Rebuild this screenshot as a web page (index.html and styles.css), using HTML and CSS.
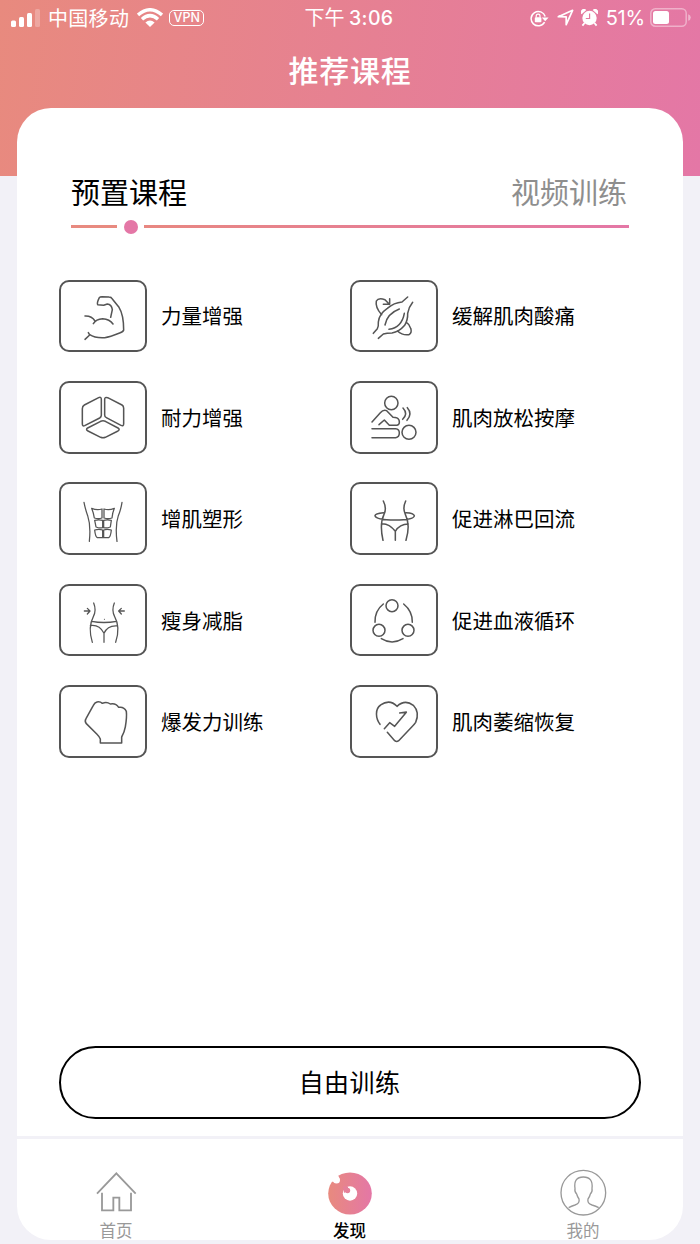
FILE: index.html
```html
<!DOCTYPE html>
<html lang="zh-CN">
<head>
<meta charset="utf-8">
<title>推荐课程</title>
<link rel="stylesheet" href="styles.css">
</head>
<body>
<div class="app">
  <header class="status">
    <div class="status-left">
      <svg class="signal" viewBox="0 0 29 18"><rect x="0" y="11.5" width="5" height="6.5" rx="1.5"/><rect x="8" y="8" width="5" height="10" rx="1.5"/><rect x="16" y="4" width="5" height="14" rx="1.5"/><rect x="24" y="0" width="5" height="18" rx="1.5" opacity=".25"/></svg>
      <span class="carrier">中国移动</span>
      <svg class="wifi" viewBox="0 0 26 19"><path d="M1 7Q13-3.5 25 7M5 11.3Q13 4 21 11.3" fill="none" stroke="#fff" stroke-width="3.4"/><path d="M8.4 14.6Q13 10.5 17.6 14.6L13 19Z"/></svg>
      <span class="vpn">VPN</span>
    </div>
    <div class="status-time">下午 <b>3:06</b></div>
    <div class="status-right">
      <svg class="lock" viewBox="0 0 19 17"><path d="M14.6 12.2A7.2 7.2 0 1 1 15.2 6.500" fill="none" stroke="#fff" stroke-width="1.5"/><path d="M11.800 7.4h6.800l-3.400 3.800z"/><rect x="4.8" y="7.2" width="6.600" height="5" rx=".8"/><path d="M6.200 7.5V6a1.900 1.900 0 0 1 3.800 0v1.5" fill="none" stroke="#fff" stroke-width="1.200"/></svg>
      <svg class="arrow" viewBox="0 0 17 17"><path d="M1.3 7.7L15.6 1.3L9.2 15.7V7.9Z" fill="none" stroke="#fff" stroke-width="1.7" stroke-linejoin="round"/></svg>
      <svg class="alarm" viewBox="0 0 17 18"><circle cx="8.5" cy="9" r="7.200"/><path d="M.6 5.2A3 3 0 0 1 5.3 1ZM16.400 5.2A3 3 0 0 0 11.7 1Z"/><path d="M3.6 14l-2.2 2.6M13.4 14l2.2 2.6" stroke="#fff" stroke-width="1.8"/><path d="M8.6 4.6v4.9H4.8" fill="none" stroke="#e37ca0" stroke-width="1.2"/></svg>
      <span class="percent">51%</span>
      <svg class="battery" viewBox="0 0 41 19"><rect x=".8" y=".8" width="35.4" height="17.4" rx="4.5" fill="none" stroke="#fff" stroke-opacity=".42" stroke-width="1.5"/><rect x="3" y="3" width="16" height="13" rx="2.5"/><path d="M38.2 6.2Q40.8 7 40.8 9.5T38.2 12.8Z" opacity=".45"/></svg>
    </div>
  </header>
  <h1 class="title">推荐课程</h1>

  <main class="card">
    <div class="tabs"><span class="tab active">预置课程</span><span class="tab">视频训练</span></div>
    <div class="slider"><i class="bar-short"></i><i class="dot"></i><i class="bar-long"></i></div>

    <section class="courses">
      <div class="course">
        <svg class="tile" viewBox="34 34 252 206"><path d="M106 136Q126 135 136 151M131 159Q139 145 159 144Q180 145 190 160M183 140L188 117Q186 101 173 100L162 104L144 102Q141 97 149 81Q151 78 157 78L178 79Q185 79 188 85L208 110Q222 132 222 178Q221 183 210 187Q180 199 165 201Q137 203 119 191M116 186L120 193L106 206"/></svg>
        <span>力量增强</span>
      </div>
      <div class="course">
        <svg class="tile" viewBox="37 34 252 206"><path d="M101 188L113 174Q117 167 116 154Q118 130 143 113Q163 96 187 94L204 79M116 203L131 190Q141 187 157 187Q178 184 195 164Q205 148 204 128Q207 110 219 95M136 163Q142 129 179 115M148 176Q186 171 194 128M126 132Q106 110 110 91Q116 80 136 87L149 101M131 101H150V84M173 181Q189 195 208 192Q218 186 213 173Q210 161 201 156"/></svg>
        <span>缓解肌肉酸痛</span>
      </div>
      <div class="course">
        <svg class="tile" viewBox="34 338 252 206"><path d="M104 404L147 382Q155 378 155 388V435Q155 440 150 443L105 466Q98 469 98 460V415Q98 407 104 404ZM174 382L217 404Q222 407 222 414V460Q222 469 214 465L170 442Q165 440 165 434V387Q165 379 174 382ZM114 473L153 453Q160 450 167 453L205 473Q212 477 205 482L167 501Q160 504 153 501L115 482Q107 478 114 473Z"/></svg>
        <span>耐力增强</span>
      </div>
      <div class="course">
        <svg class="tile" viewBox="37 338 252 206"><circle cx="155" cy="398" r="20"/><circle cx="208" cy="486" r="21"/><path d="M97 455L122 427Q131 417 141 421L160 441Q174 441 178 449Q182 462 172 465H149L134 449L118 463M97 475H168Q179 476 179 488T168 502H97M190 413Q206 430 189 447M203 412Q219 430 202 450"/></svg>
        <span>肌肉放松按摩</span>
      </div>
      <div class="course">
        <svg class="tile thin" viewBox="34 42 252 206"><path d="M103 97Q107 118 114 137Q124 167 119 214M217 97Q214 118 206 137Q196 166 202 214M126 115Q142 122 157 117V144Q146 148 134 144Q132 130 126 115ZM194 115Q178 122 163 117V144Q175 148 187 144Q188 130 194 115ZM135 151Q148 148 159 151V173Q149 175 139 171ZM185 151Q172 148 162 151V173Q172 175 182 171ZM135 180Q148 176 159 180V203H143Q137 200 135 180ZM185 180Q172 176 162 180V203H177Q183 200 185 180Z"/></svg>
        <span>增肌塑形</span>
      </div>
      <div class="course">
        <svg class="tile" viewBox="37 42 252 206"><path d="M131 93Q142 115 133 133Q119 162 130 211M198 93Q188 115 197 133Q213 164 199 211M131 128Q107 130 106 137Q108 150 166 150Q224 149 224 137Q222 129 199 128M126 161Q149 160 167 184Q180 162 206 162M167 184V211"/></svg>
        <span>促进淋巴回流</span>
      </div>
      <div class="course">
        <svg class="tile thin" viewBox="34 346 252 206"><path d="M132 397Q141 419 131 438Q114 470 128 515M194 397Q185 419 195 438Q213 470 198 515M126 452Q162 459 201 452M122 465Q149 461 163 488Q174 463 204 466M163 488V515M104 421H120M113 413L121 421L113 430M224 421H208M215 413L207 421L215 430"/><path d="M164 446h.5" stroke-width="3"/></svg>
        <span>瘦身减脂</span>
      </div>
      <div class="course">
        <svg class="tile" viewBox="37 346 252 206"><circle cx="157" cy="405" r="18"/><circle cx="118" cy="479" r="18"/><circle cx="205" cy="479" r="18"/><path d="M131 400Q105 420 106 455M192 400Q219 422 218 455M125 504Q157 524 190 504"/></svg>
        <span>促进血液循环</span>
      </div>
      <div class="course">
        <svg class="tile" viewBox="34 35 252 206"><path d="M152 203V191Q149 184 142 177L110 145Q104 138 109 130L131 90Q135 82 142 80Q151 78 158 84Q171 78 182 86Q198 82 207 96Q223 93 230 108Q232 125 227 155Q224 172 216 185V203Z"/></svg>
        <span>爆发力训练</span>
      </div>
      <div class="course">
        <svg class="tile" viewBox="37 35 252 206"><path d="M121 147C108 130 105 101 123 89Q150 70 172 93Q196 71 221 90Q241 111 228 141Q224 147 219 152L177 196Q171 201 165 196L143 171M134 160L150 142L165 153L200 111M180 113L200 110"/></svg>
        <span>肌肉萎缩恢复</span>
      </div>
    </section>
    <button class="free">自由训练</button>
  </main>

  <nav class="nav">
    <div class="nav-item">
      <svg class="nav-icon" viewBox="279 415 141 147"><g fill="none" stroke="#999" stroke-width="5.500"><path d="M291 492L349 431L407 492M306 489V542H340V504H358V542H393V489"/></g></svg>
      <span>首页</span>
    </div>
    <div class="nav-item current">
      <svg class="nav-icon" viewBox="0 0 47 49"><defs><linearGradient id="g"><stop stop-color="#e88a7e"/><stop offset="1" stop-color="#e477a6"/></linearGradient></defs><ellipse cx="23" cy="25.500" rx="21.800" ry="21" fill="url(#g)"/><path d="M3.500 9L9 7.500L12 8.500V13L5.500 14Z" fill="#fff"/><circle cx="9.500" cy="12" r="3.500" fill="#fff"/><circle cx="23" cy="25.500" r="7.200" fill="#fff"/><path d="M16 18.500h5v4l-4 2.500z" fill="#e5809a"/><circle cx="20.500" cy="22.500" r="2.700" fill="#e5809a"/></svg>
      <span>发现</span>
    </div>
    <div class="nav-item">
      <svg class="nav-icon" viewBox="629 415 141 147"><g fill="none" stroke="#999" stroke-width="4"><circle cx="699" cy="489" r="67"/><path d="M655 534Q663 529 674 526Q689 521 686 508Q681 501 679 493Q672 487 674 476Q669 442 699 442T725 476Q727 487 720 493Q718 502 713 508Q710 521 725 526Q737 529 745 534"/></g></svg>
      <span>我的</span>
    </div>
  </nav>
</div>
</body>
</html>
```
FILE: styles.css
```css
* { box-sizing: border-box; }
body {
  margin: 0;
  background: #f2f1f7;
  font-family: "Noto Sans CJK SC", sans-serif;
  color: #000;
}
.app {
  width: 700px;
  height: 1244px;
  overflow: hidden;
  padding: 0 17px;
  background: linear-gradient(97deg, #e88a7e, #e477a6) top / 100% 176px no-repeat;
}
svg { display: block; flex: none; }
.status {
  display: grid;
  grid-template-columns: 1fr auto 1fr;
  align-items: center;
  height: 36px;
  margin: 0 -6px;
  color: #fff;
  fill: #fff;
  font-size: 20px;
  line-height: 36px;
}
.status-left, .status-right { display: flex; align-items: center; }
.status-right { justify-content: flex-end; margin-right: -2px; }
.signal { width: 29px; height: 18px; margin-top: -1px; }
.carrier { margin-left: 8px; letter-spacing: .3px; margin-top: -1px; }
.wifi { width: 26px; height: 19px; margin-left: 8px; margin-top: -2px; }
.vpn {
  width: 35px;
  height: 16px;
  margin-left: 6px;
  margin-top: -1px;
  border: 1.5px solid #fff;
  border-radius: 5px;
  font: 500 12.5px/14px Inter, sans-serif;
  text-align: center;
}
.status-time { margin: -2px 1px 0 -1px; }
.status-time b { font: 500 19.5px Inter, sans-serif; letter-spacing: .4px; }
.lock { width: 19px; height: 17px; }
.arrow { width: 17px; height: 17px; margin-left: 8px; margin-top: -1px; }
.alarm { width: 17px; height: 18px; margin-left: 7px; margin-top: -1px; }
.percent { margin-left: 8px; font: 20px/36px Inter, sans-serif; letter-spacing: -.2px; }
.battery { width: 41px; height: 19px; margin-left: 5px; margin-top: -1px; }
.title {
  margin: 0;
  height: 72px;
  color: #fff;
  font-size: 30px;
  font-weight: 500;
  line-height: 66px;
  letter-spacing: .7px;
  text-align: center;
}
.card {
  display: flex;
  flex-direction: column;
  height: 1028px;
  padding: 61px 42px 0;
  border-radius: 34px 34px 0 0;
  background: #fff;
}
.tabs {
  display: flex;
  justify-content: space-between;
  margin: 0 14px 0 12px;
  font-size: 29px;
  line-height: 44px;
}
.tab { color: #8e8e8e; }
.tab.active { color: #000; }
.slider {
  display: flex;
  align-items: center;
  height: 14px;
  margin: 6.5px 12px 0 12px;
}
.bar-short { width: 46px; height: 3.5px; background: #e88a80; }
.dot { width: 14px; height: 14px; margin: 0 6.5px; border-radius: 50%; background: #e477a6; }
.bar-long { flex: 1; height: 3.5px; background: linear-gradient(90deg, #e88781, #e477a6); }
.courses {
  display: grid;
  grid-template-columns: 1fr 1fr;
  row-gap: 28.75px;
  margin-top: 46px;
}
.course { display: flex; align-items: center; gap: 14px; font-size: 20.5px; line-height: 30px; }
.course span { margin-top: -1px; }
.tile {
  width: 88px;
  height: 72.67px;
  border: 2px solid #555;
  border-radius: 10px;
  fill: none;
  stroke: #555;
  stroke-width: 4.6;
  stroke-linecap: round;
  stroke-linejoin: round;
}
.tile.thin { stroke-width: 3.8; }
.free {
  height: 73px;
  margin-top: auto;
  margin-bottom: 17px;
  padding: 0 1px 3px 0;
  border: 2px solid #000;
  border-radius: 37px;
  background: #fff;
  color: #000;
  font: 25px/66px "Noto Sans CJK SC", sans-serif;
  letter-spacing: .4px;
}
.nav {
  display: grid;
  grid-template-columns: 47px 47px 47px;
  justify-content: space-between;
  height: 101px;
  margin-top: 3px;
  padding: 29px 76px 0;
  border-radius: 0 0 34px 34px;
  background: #fff;
}
.nav-item {
  display: flex;
  flex-direction: column;
  align-items: center;
  color: #999;
  font-size: 16.5px;
  line-height: 24px;
}
.nav-item span { margin-left: -1px; }
.nav-icon { width: 47px; height: 49px; margin-bottom: 1px; }
.nav-item.current { color: #000; font-weight: 500; }
```
